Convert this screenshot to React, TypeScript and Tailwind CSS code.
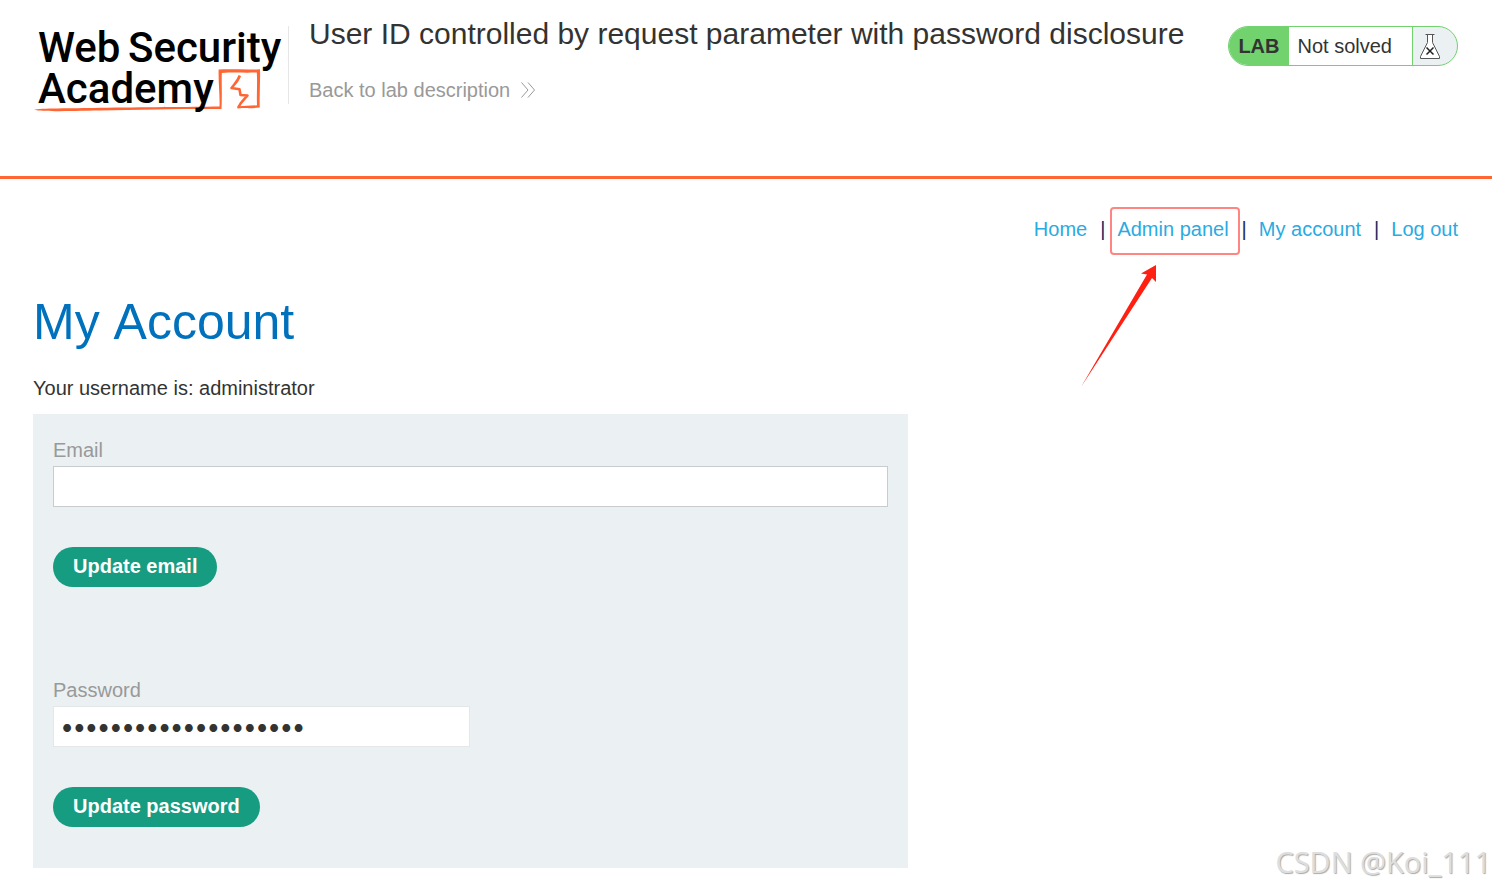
import { useState } from 'react'

function Logo() {
  return (
    <svg className="w-64 h-24 shrink-0" viewBox="33 20 256 96" role="img" aria-label="Web Security Academy">
      <path d="M34 109.800 C40 108 70 108.600 100 107.800 C140 107.200 190 107 219.500 106.500 C220 95 218.300 84 218.600 69.500 C233 69 246 70 260 69.300 C260.500 82 259.200 95 259.800 107.500 C252 108.700 245 107.600 237.500 108.600 L237 106.500 C245 105.500 250 106 257 105.200 C256.500 95 257.500 83 256.800 72.500 C246 73 233 72.200 221.800 73 C221.500 84 222.200 95 221.500 109 C190 108.800 140 109.500 100 110.500 C70 110.700 45 112.300 34 109.800 Z"
        fill="#ff6633" />
      <path d="M239.800 75.500 C238 81 235 83.500 231.500 88 L239.500 89.200 L240.500 95 L247.500 95.500 C244 99.500 241 102 238.500 107"
        fill="none" stroke="#ff6633" strokeWidth="2.600" strokeLinejoin="round" />
      <g fontFamily="Roboto, sans-serif" fontSize="42" fontWeight="500" fill="#000">
        <text x="38" y="62">Web</text>
        <text x="128" y="62">Security</text>
        <text x="38" y="103">Academy</text>
      </g>
    </svg>
  )
}

function LabStatus() {
  return (
    <div className="flex shrink-0 h-10 rounded-full overflow-hidden border border-[#71d26e] bg-[#ebf0f2]">
      <span className="flex items-center px-[9px] bg-[#71d26e] font-bold">LAB</span>
      <span className="flex items-center pl-[9px] pr-5 bg-white border-r border-[#71d26e]">Not solved</span>
      <span className="flex items-center justify-center w-11 pr-2.5">
        <svg width="22" height="26" viewBox="0 0 22 26" fill="#fff" stroke="#555" strokeWidth="1">
          <path d="M8.500 1.500 V9.500 L1.500 23.500 V25.500 H20.500 V23.500 L13.500 9.500 V1.500 Z" />
          <path d="M6.500 1.500 H15.500" />
          <path d="M7.500 14.500 L14.500 21.500 M14.500 14.500 L7.500 21.500" stroke="#222" strokeWidth="1.500" />
        </svg>
      </span>
    </div>
  )
}

function Header() {
  return (
    <header className="flex items-start h-[179px] pl-[33px] pr-[34px] pt-5 border-b-3 border-[#ff6633]">
      <Logo />
      <div className="flex-1 min-w-0 h-[78px] mt-1.5 pl-5 border-l border-[#e6e6e6] -ml-px">
        <h2 className="-mt-3 text-[30px] leading-10">User ID controlled by request parameter with password disclosure</h2>
        <a href="#lab" className="inline-flex items-center gap-[11px] mt-6 leading-6 text-[#999]">
          Back to lab description
          <svg width="14" height="16" viewBox="0 0 14 16" fill="none" stroke="#999" strokeWidth="1">
            <path d="M0.500 0.500 L7 8 L0.500 15.500 M7 0.500 L13.500 8 L7 15.500" />
          </svg>
        </a>
      </div>
      <div className="mt-1.5">
        <LabStatus />
      </div>
    </header>
  )
}

function Callout() {
  return (
    <span className="pointer-events-none">
      <span className="absolute -left-[7px] -right-[11px] -top-2.5 h-12 border-2 border-[#ff8583] rounded" />
      <svg className="absolute -left-9 top-12" width="76" height="122" viewBox="0 0 76 122">
        <path d="M75 0 L60 8.500 L66 9.500 L0 122 L71 13 L75 17 Z" fill="#ff2012" />
      </svg>
    </span>
  )
}

function Nav() {
  const links = [
    { href: '#home', label: 'Home' },
    { href: '#admin', label: 'Admin panel', marked: true },
    { href: '#account', label: 'My account' },
    { href: '#logout', label: 'Log out' },
  ]
  return (
    <nav className="flex justify-end gap-[13px] leading-6">
      {links.map((l, i) => (
        <span key={l.href} className="flex gap-3">
          {i > 0 && <span className="text-[#212a5e]">|</span>}
          <span className="relative">
            <a href={l.href} className="text-[#29abe2] hover:underline">{l.label}</a>
            {l.marked && <Callout />}
          </span>
        </span>
      ))}
    </nav>
  )
}

function AccountForms() {
  const [email, setEmail] = useState('')
  const [password, setPassword] = useState('a8k2m5x9q1w7e4r6t3yz')
  const button = 'h-10 px-5 pb-0.5 rounded-full bg-[#169c80] text-white font-bold'

  return (
    <div className="w-[61.4%] bg-[#ebf0f2] px-5 pt-6 pb-[41px]">
      <form onSubmit={e => e.preventDefault()}>
        <label htmlFor="email" className="block leading-6 text-[#999]">Email</label>
        <input id="email" type="email" value={email} onChange={e => setEmail(e.target.value)}
          className="block w-full h-[41px] mt-1 px-[7px] bg-white border border-[#c8cccf] outline-none" />
        <button className={`${button} mt-10`}>Update email</button>
      </form>
      <form className="mt-[91px]" onSubmit={e => e.preventDefault()}>
        <label htmlFor="password" className="block leading-6 text-[#999]">Password</label>
        <input id="password" type="password" value={password} onChange={e => setPassword(e.target.value)}
          className="block w-1/2 h-[41px] mt-1 px-[7px] bg-white border border-[#e4e6e7] outline-none text-[21px] font-['Lato',sans-serif]" />
        <button className={`${button} mt-10`}>Update password</button>
      </form>
    </div>
  )
}

function App() {
  return (
    <div className="relative min-h-screen bg-white font-['Liberation_Sans',Arial,sans-serif] text-[20px] text-[#333332]">
      <Header />
      <main className="pl-[33px] pr-[34px] pt-[38px] pb-5">
        <Nav />
        <h1 className="mt-[49px] text-[50px] leading-[64px] text-[#0071bc] [font-kerning:none]">My Account</h1>
        <p className="mt-[22px] mb-3.5 leading-6">Your username is: administrator</p>
        <AccountForms />
      </main>
      <span className="absolute right-px bottom-[9px] text-[29px] leading-9 text-[#dedede] font-['Open_Sans',sans-serif] [text-shadow:1px_1px_1px_#aaa]">
        CSDN @Koi_111
      </span>
    </div>
  )
}

export default App
